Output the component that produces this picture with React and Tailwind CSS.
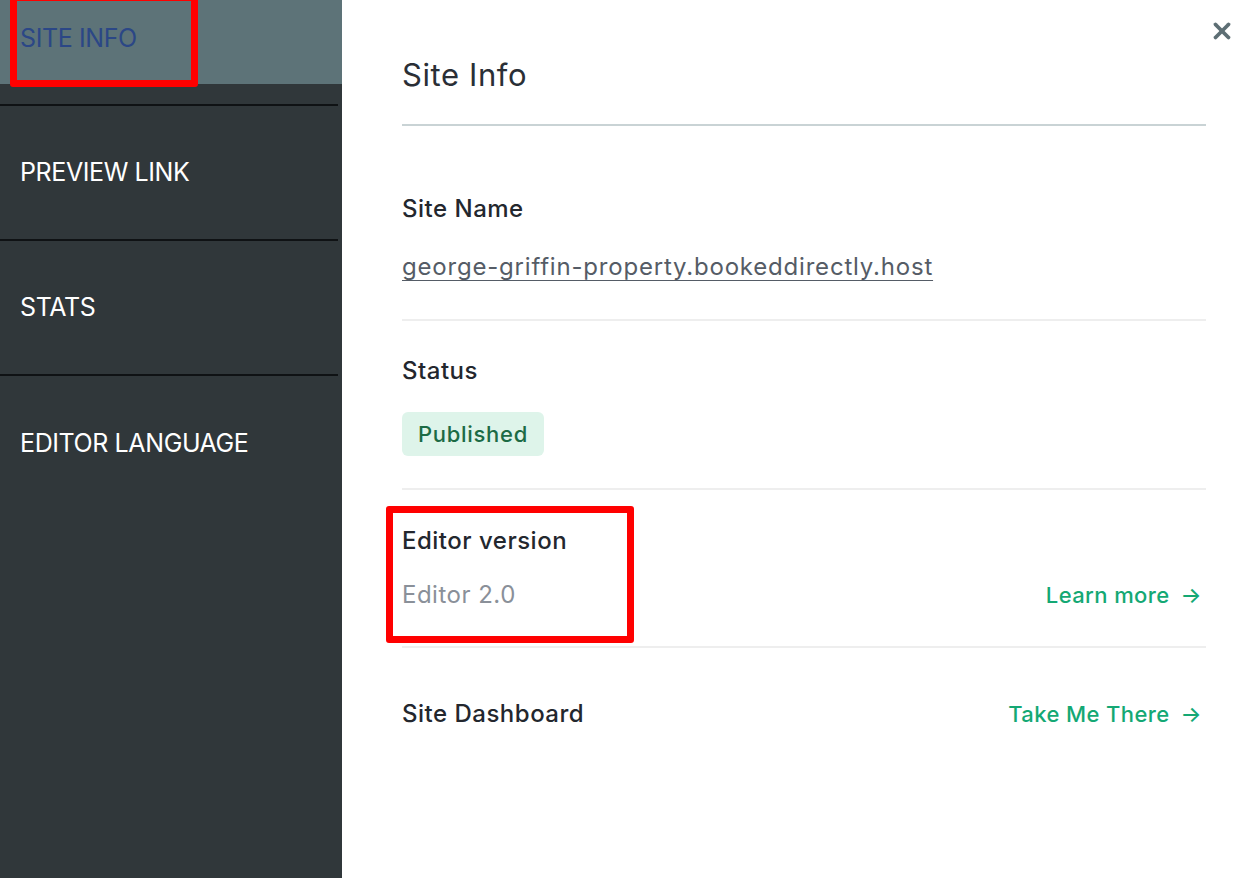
import { X } from 'lucide-react';

const font = { fontFamily: 'Inter, "Noto Sans", sans-serif' };

// NavItem = one row of the dark side menu
function NavItem({ label }) {
    return (
        <div className="h-[135px] flex items-center pl-5 border-b-2 border-[#0f1214] w-[338px]">
            <span className="text-[25px] text-white tracking-[-0.4px]">{label}</span>
        </div>
    );
}

// GoLink = green right-side action with arrow
function GoLink({ children }) {
    return (
        <a href="#" className="flex items-center gap-[11px] text-[22px] font-medium text-[#14a874] tracking-[0.4px] mr-1">
            {children}
            <span className="text-[22px]">→</span>
        </a>
    );
}

export default function App() {
    return (
        <div className="relative flex h-[878px] w-[1254px] overflow-hidden bg-white" style={font}>
            {/* Sidebar */}
            <aside className="w-[342px] shrink-0 bg-[#30373a] flex flex-col">
                <div className="h-[84px] bg-[#5d7378] flex items-start pt-[20px] pl-5">
                    <span className="text-[25px] text-[#2b4786] tracking-[-0.4px]">SITE INFO</span>
                </div>
                <div className="h-[22px] w-[338px] border-b-2 border-[#0f1214]" />
                <NavItem label="PREVIEW LINK" />
                <NavItem label="STATS" />
                <div className="h-[135px] flex items-center pl-5">
                    <span className="text-[25px] text-white tracking-[-0.4px]">EDITOR LANGUAGE</span>
                </div>
            </aside>

            {/* Main panel */}
            <main className="flex-1 pl-[60px] pr-[48px]">
                <div className="pt-[56px] pb-[30px] border-b-2 border-[#c9d3d5]">
                    <h1 className="text-[31px] leading-[38px] text-[#2a2f36] tracking-[0.6px]">Site Info</h1>
                </div>

                {/* Site name */}
                <section className="pt-[66px] pb-[35px] border-b-2 border-[#eeeeee]">
                    <h2 className="text-[24px] leading-[34px] font-medium text-[#23272e] tracking-[0.5px]">Site Name</h2>
                    <a href="#" className="block mt-[24px] text-[24px] leading-[34px] text-[#555c66] underline underline-offset-[5px] decoration-1 tracking-[0.8px]">
                        george-griffin-property.bookeddirectly.host
                    </a>
                </section>

                {/* Status */}
                <section className="pt-[33px] pb-[32px] border-b-2 border-[#eeeeee]">
                    <h2 className="text-[24px] leading-[34px] font-medium text-[#23272e] tracking-[0.5px]">Status</h2>
                    <span className="inline-flex items-center h-[44px] mt-[24px] px-4 rounded-md bg-[#def4ea] text-[22px] font-medium text-[#1c6b45] tracking-[0.7px]">
                        Published
                    </span>
                </section>

                {/* Editor version */}
                <section className="pt-[34px] pb-[34px] border-b-2 border-[#eeeeee]">
                    <h2 className="text-[24px] leading-[34px] font-medium text-[#23272e] tracking-[0.5px]">Editor version</h2>
                    <div className="mt-[20px] flex items-center justify-between">
                        <span className="text-[24px] leading-[34px] text-[#8a9099] tracking-[0.5px]">Editor 2.0</span>
                        <GoLink>Learn more</GoLink>
                    </div>
                </section>

                {/* Dashboard */}
                <section className="pt-[49px] flex items-center justify-between">
                    <h2 className="text-[24px] leading-[34px] font-medium text-[#23272e] tracking-[0.5px]">Site Dashboard</h2>
                    <GoLink>Take Me There</GoLink>
                </section>
            </main>

            {/* Close button */}
            <button className="absolute top-[18px] right-[19px] text-[#5d6e74]">
                <X size={26} strokeWidth={3.5} />
            </button>

            {/* Red annotation boxes */}
            <div className="absolute left-[10px] top-[-6px] w-[188px] h-[93px] border-[7px] border-[#ff0000] rounded-[3px] pointer-events-none" />
            <div className="absolute left-[386px] top-[506px] w-[248px] h-[137px] border-[7px] border-[#ff0000] rounded-[3px] pointer-events-none" />
        </div>
    );
}
